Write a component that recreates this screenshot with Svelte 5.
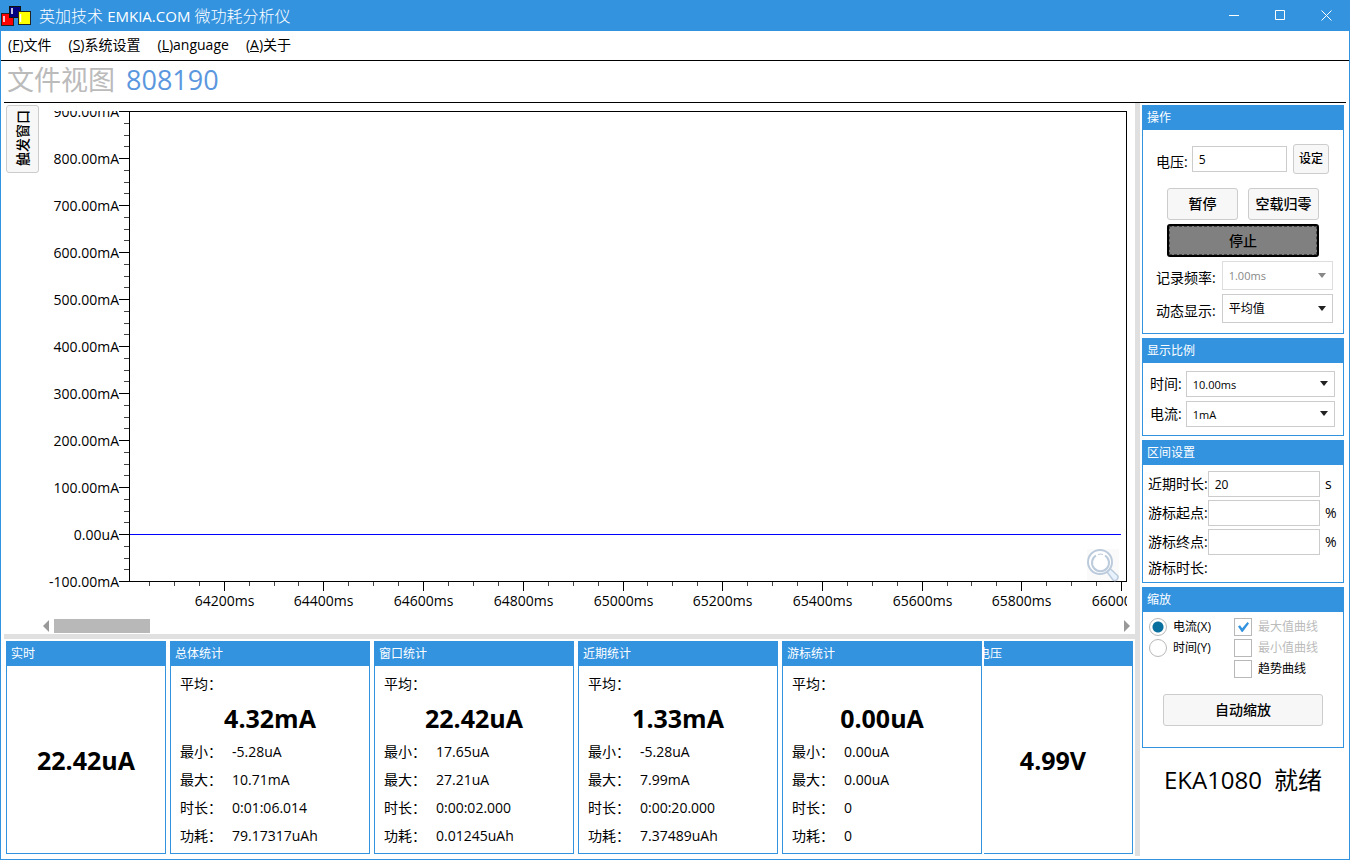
<script lang="ts">
    const menus = [
        { key: 'F', text: '文件' },
        { key: 'S', text: '系统设置' },
        { key: 'L', text: 'anguage' },
        { key: 'A', text: '关于' }
    ];

    const stats = [
        { title: '总体统计', avg: '4.32mA', min: '-5.28uA', max: '10.71mA', time: '0:01:06.014', power: '79.17317uAh' },
        { title: '窗口统计', avg: '22.42uA', min: '17.65uA', max: '27.21uA', time: '0:00:02.000', power: '0.01245uAh' },
        { title: '近期统计', avg: '1.33mA', min: '-5.28uA', max: '7.99mA', time: '0:00:20.000', power: '7.37489uAh' },
        { title: '游标统计', avg: '0.00uA', min: '0.00uA', max: '0.00uA', time: '0', power: '0' }
    ];

    // visible window of the chart
    const tStart = 64010, tSpan = 2000;
    const iMax = 900, iSpan = 1000;
    const axisLeft = 88, axisBottom = 38;

    let chartW = $state(1086);
    let chartH = $state(508);

    let voltage = $state('5');
    let recent = $state('20');
    let cursorFrom = $state('');
    let cursorTo = $state('');
    let axis = $state('X');

    let plotRight = $derived(chartW - 1);
    let plotBottom = $derived(chartH - axisBottom);

    let yTicks = $derived(Array.from({ length: 41 }, (_, i) => {
        const value = iMax - i * 25;
        return {
            y: Math.round((i * 25 / iSpan) * plotBottom) + 0.5,
            major: i % 4 === 0,
            label: value === 0 ? '0.00uA' : value.toFixed(2) + 'mA'
        };
    }));

    let xTicks = $derived(Array.from({ length: 40 }, (_, i) => {
        const t = 64050 + i * 50;
        return {
            x: Math.round(axisLeft + ((t - tStart) / tSpan) * (plotRight - axisLeft)) + 0.5,
            major: t % 200 === 0,
            label: t + 'ms'
        };
    }));
</script>

<div class="window">
    <header class="titlebar">
        <svg class="logo" width="32" height="31" viewBox="0 0 32 31" aria-hidden="true">
            <rect x="0.5" y="13.5" width="12" height="12" fill="#f00" stroke="#222" />
            <path d="M3 16v6" stroke="#fff" stroke-width="1.500" />
            <rect x="8.500" y="6.500" width="11" height="11" fill="#000080" stroke="#111" />
            <path d="M11 8v6" stroke="#fff" stroke-width="1.500" />
            <rect x="17.500" y="11.500" width="12" height="13" fill="#ff0" stroke="#222" />
            <path d="M19.500 14v8" stroke="#fff" stroke-width="1.500" />
        </svg>
        <h1>英加技术 <span>EMKIA.COM</span> 微功耗分析仪</h1>
        <div class="controls">
            <button aria-label="最小化"><svg width="11" height="11"><path d="M0 5.5h10" /></svg></button>
            <button aria-label="最大化"><svg width="11" height="11"><path d="M.5 .5h9v9h-9z" /></svg></button>
            <button aria-label="关闭"><svg width="11" height="11"><path d="M.5 .5l10 10M10.500 .5l-10 10" /></svg></button>
        </div>
    </header>

    <nav class="menu">
        {#each menus as m}
            <button>(<u>{m.key}</u>){m.text}</button>
        {/each}
    </nav>

    <div class="heading">
        <span class="view">文件视图</span>
        <span class="number">808190</span>
    </div>

    <main>
        <section class="left">
            <div class="chart-row">
                <button class="btn trigger"><span>触发窗口</span></button>
                <div class="chart-col">
                    <div class="chart" bind:clientWidth={chartW} bind:clientHeight={chartH}>
                        <svg width={chartW} height={chartH}>
                            <rect x={axisLeft + 0.5} y="0.5" width={plotRight - axisLeft} height={plotBottom} fill="#fff" stroke="#000" />
                            {#each yTicks as t}
                                <line x1={axisLeft - (t.major ? 10 : 5)} x2={axisLeft} y1={t.y} y2={t.y} class:minor={!t.major} />
                                {#if t.major}
                                    <text x={axisLeft - 10} y={t.y + 5} text-anchor="end">{t.label}</text>
                                {/if}
                            {/each}
                            {#each xTicks as t}
                                <line x1={t.x} x2={t.x} y1={plotBottom + 1} y2={plotBottom + (t.major ? 10 : 5)} class:minor={!t.major} />
                                {#if t.major}
                                    <text x={t.x} y={plotBottom + 25} text-anchor="middle">{t.label}</text>
                                {/if}
                            {/each}
                            <path d="M{axisLeft + 1} {yTicks[36].y}H{plotRight - 5}" fill="none" stroke="#0000ff" />
                            <g transform="translate({plotRight - 39} {plotBottom - 32})" fill="none" stroke="#bccbdc" stroke-width="2">
                                <rect width="32" height="32" fill="#fafafb" stroke="none" />
                                <path d="M19 21.500l3-3 8.500 8q1.500 2-.5 4t-4 .5z" fill="#e8f2fd" stroke-width="1.500" />
                                <circle cx="13" cy="13" r="12" fill="#fff" />
                                <path d="M9 6.500a8.500 8.500 0 1 0 9 0" />
                                <path d="M11 5.500a8 8 0 0 1 5 0" stroke-width="1" />
                            </g>
                        </svg>
                    </div>
                    <div class="scroll">
                        <button class="arrow prev" aria-label="向左"></button>
                        <div class="track"><div class="thumb"></div></div>
                        <button class="arrow next" aria-label="向右"></button>
                    </div>
                </div>
            </div>

            <div class="split-h"></div>

            <div class="stats">
                <section class="panel single">
                    <h2>实时</h2>
                    <div class="big">22.42uA</div>
                </section>
                {#each stats as s}
                    <section class="panel stat">
                        <h2>{s.title}</h2>
                        <dl>
                            <dt>平均：</dt>
                            <dd class="avg">{s.avg}</dd>
                            <dt>最小：</dt><dd>{s.min}</dd>
                            <dt>最大：</dt><dd>{s.max}</dd>
                            <dt>时长：</dt><dd>{s.time}</dd>
                            <dt>功耗：</dt><dd>{s.power}</dd>
                        </dl>
                    </section>
                {/each}
                <div class="clipped">
                    <section class="panel single">
                        <h2>电压</h2>
                        <div class="big">4.99V</div>
                    </section>
                </div>
            </div>
        </section>

        <div class="split-v"></div>

        <aside>
            <section class="panel">
                <h2>操作</h2>
                <div class="operate">
                    <div class="field volt">
                        <label for="voltage">电压:</label>
                        <input id="voltage" type="text" bind:value={voltage} />
                        <button class="btn set">设定</button>
                    </div>
                    <div class="actions">
                        <button class="btn">暂停</button>
                        <button class="btn">空载归零</button>
                        <button class="stop">停止</button>
                    </div>
                    <div class="field tall">
                        <label for="rate">记录频率:</label>
                        <div class="select off"><select id="rate" disabled><option>1.00ms</option></select></div>
                    </div>
                    <div class="field tall">
                        <label for="dynamic">动态显示:</label>
                        <div class="select"><select id="dynamic" class="cn"><option>平均值</option></select></div>
                    </div>
                </div>
            </section>

            <section class="panel">
                <h2>显示比例</h2>
                <div class="scale">
                    <div class="field">
                        <label for="time">时间:</label>
                        <div class="select"><select id="time"><option>10.00ms</option></select></div>
                    </div>
                    <div class="field">
                        <label for="current">电流:</label>
                        <div class="select"><select id="current"><option>1mA</option></select></div>
                    </div>
                </div>
            </section>

            <section class="panel">
                <h2>区间设置</h2>
                <div class="range">
                    <div class="field">
                        <label for="recent">近期时长:</label>
                        <input id="recent" type="text" bind:value={recent} />
                        <span class="unit">s</span>
                    </div>
                    <div class="field">
                        <label for="from">游标起点:</label>
                        <input id="from" type="text" bind:value={cursorFrom} />
                        <span class="unit">%</span>
                    </div>
                    <div class="field">
                        <label for="to">游标终点:</label>
                        <input id="to" type="text" bind:value={cursorTo} />
                        <span class="unit">%</span>
                    </div>
                    <div class="duration">游标时长:</div>
                </div>
            </section>

            <section class="panel">
                <h2>缩放</h2>
                <div class="zoom">
                    <div class="radios">
                        <label><input type="radio" name="axis" value="X" bind:group={axis} />电流(X)</label>
                        <label><input type="radio" name="axis" value="Y" bind:group={axis} />时间(Y)</label>
                    </div>
                    <div class="checks">
                        <label class="off"><input type="checkbox" checked disabled />最大值曲线</label>
                        <label class="off"><input type="checkbox" disabled />最小值曲线</label>
                        <label><input type="checkbox" />趋势曲线</label>
                    </div>
                    <button class="btn auto">自动缩放</button>
                </div>
            </section>

            <div class="status"><span>EKA1080</span><span>就绪</span></div>
        </aside>
    </main>
</div>

<style>
    :global(body) { margin: 0; background: #fff; }
    .window {
        box-sizing: border-box; min-height: 100vh; display: flex; flex-direction: column;
        border: 1px solid #3393df; border-top: 0; background: #fff; color: #000;
        font-family: "Open Sans", "Noto Sans CJK SC", sans-serif; font-size: 14px; line-height: 20px;
    }
    .window * { box-sizing: border-box; }
    button, input, select { font-family: inherit; color: inherit; margin: 0; }
    button { padding: 0; }

    .titlebar { height: 31px; display: flex; align-items: center; background: #3393df; color: #fff; }
    .logo { flex: none; margin-right: 6px; }
    h1 { margin: 0; font-size: 16px; font-weight: 300; line-height: 24px; flex: 1; white-space: nowrap; }
    h1 span { font-size: 15px; font-weight: 400; }
    .controls { display: flex; align-self: stretch; }
    .controls button { width: 46px; border: 0; background: none; }
    .controls svg { display: block; margin: 0 auto; fill: none; stroke: #fff; }

    .menu { height: 30px; padding: 0 7px 2px; display: flex; gap: 17px; border-bottom: 1px solid #000; }
    .menu button { border: 0; background: none; font-size: 14px; line-height: 20px; }

    .heading {
        height: 42px; margin: 0 3px; padding: 0 3px 3px; display: flex; align-items: center; gap: 11px;
        border-bottom: 1px solid #000; font-size: 27px; line-height: 36px;
    }
    .view { color: #bbb; }
    .number { color: #5b97de; }

    main { flex: 1; display: flex; padding: 0 0 3px 3px; }
    .left { flex: 1; min-width: 0; display: flex; flex-direction: column; }
    .split-h { height: 5px; background: #e0e0e0; }
    .split-v { width: 5px; background: #e0e0e0; }

    .chart-row { flex: 1; display: flex; gap: 2px; padding: 2px 2px 1px; }
    .chart-col { flex: 1; min-width: 0; display: flex; flex-direction: column; padding-top: 6px; }
    .chart { flex: 1 1 0; min-height: 300px; margin-right: 6px; overflow: hidden; }
    .chart svg { display: block; }
    .chart text { font-size: 14px; }
    .chart line { stroke: #000; }
    .chart line.minor { stroke: #444; }

    .scroll { height: 14px; display: flex; align-items: center; gap: 5px; padding: 0 3px 0 2px; }
    .track { flex: 1; }
    .thumb { width: 9%; height: 14px; background: #b8b8b8; }
    .arrow { width: 6px; height: 12px; border: 0; background: #999; }
    .prev { clip-path: polygon(100% 0, 100% 100%, 0 50%); }
    .next { clip-path: polygon(0 0, 100% 50%, 0 100%); }

    .btn {
        border: 1px solid #ccc; border-radius: 3px; background: #f7f7f7;
        font-size: 14px; font-weight: 500; line-height: 20px; white-space: nowrap;
    }
    .trigger { width: 33px; height: 68px; padding-top: 3px; }
    .trigger span { display: inline-block; writing-mode: vertical-rl; text-orientation: sideways; transform: rotate(180deg); }

    .panel { border: 1px solid #3393df; background: #fff; }
    h2 {
        margin: 0; height: 24px; padding: 0 4px; background: #3393df; color: #fff;
        font-size: 12px; font-weight: 400; line-height: 24px; white-space: nowrap;
    }

    .stats { display: flex; gap: 4px; padding: 2px; }
    .stat { flex: 1 1 200px; }
    .single { flex: 1 1 160px; display: flex; flex-direction: column; }
    .clipped { flex: 1 1 149px; min-width: 0; margin-left: -2px; display: flex; justify-content: flex-end; overflow: hidden; }
    .clipped .single { flex: 1 0 160px; }
    .big, .avg { font-size: 25px; font-weight: 700; text-align: center; line-height: 40px; }
    .big { flex: 1; display: flex; align-items: center; justify-content: center; }
    dl { margin: 0; padding: 4px 9px 3px; display: grid; grid-template-columns: 52px 1fr; line-height: 28px; }
    dt, dd { margin: 0; white-space: nowrap; }
    dt:first-child { grid-column: 1 / -1; }
    .avg { grid-column: 1 / -1; }

    aside { width: 209px; padding: 2px 5px 0 2px; display: flex; flex-direction: column; gap: 4px; }
    .field { display: flex; align-items: center; }
    .field label { flex: none; white-space: nowrap; }
    .field input {
        flex: 1; min-width: 0; height: 26px; padding: 0 6px; border: 1px solid #ccc; background: #fff; font-size: 12px;
    }
    .select { position: relative; flex: 1; min-width: 0; height: 26px; }
    .select::after {
        content: ''; position: absolute; right: 7px; top: 50%; margin-top: -3px;
        border: 4px solid transparent; border-top: 5px solid #222; border-bottom: 0; pointer-events: none;
    }
    .select.off::after { border-top-color: #888; }
    select {
        appearance: none; display: block; width: 100%; height: 100%; padding: 0 6px;
        border: 1px solid #ccc; border-radius: 0; background: #fff; font-size: 11px;
    }
    select.cn { font-size: 12px; }
    select:disabled { color: #888; border-color: #ddd; opacity: 1; }

    .operate { padding: 14px 10px 10px 13px; display: flex; flex-direction: column; gap: 4px; }
    .operate .field label { padding-top: 5px; }
    .operate .volt { gap: 4px; margin: 0 4px 10px 0; }
    .set { width: 36px; height: 30px; margin-left: 2px; font-size: 12px; }
    .actions { display: grid; grid-template-columns: 1fr 1fr; gap: 4px 10px; margin: 0 14px 0 11px; }
    .actions .btn { height: 32px; }
    .stop {
        grid-column: 1 / -1; height: 33px; border: 2px solid #000; border-radius: 3px; background: #808080;
        outline: 1px dashed #444; outline-offset: -3px; font-size: 14px; font-weight: 500; line-height: 20px;
    }
    .tall { gap: 6px; }
    .tall .select { height: 29px; }

    .scale { padding: 8px 8px 8px 7px; display: flex; flex-direction: column; gap: 4px; }
    .scale .field { gap: 4px; }

    .range { padding: 6px 0 5px 5px; display: flex; flex-direction: column; gap: 3px; }
    .unit { width: 23px; padding-left: 5px; }
    .duration { line-height: 19px; }

    .zoom { padding: 6px 6px 21px; display: grid; grid-template-columns: 85px 1fr; row-gap: 16px; font-size: 12px; }
    .radios, .checks { display: flex; flex-direction: column; gap: 3px; }
    .zoom label { display: flex; align-items: center; gap: 6px; height: 18px; white-space: nowrap; }
    .zoom label.off { color: #bbb; }
    .zoom input { appearance: none; position: relative; width: 18px; height: 18px; border: 1px solid #b8b8b8; background: #fff; }
    .zoom input[type="radio"] { border-radius: 50%; }
    .zoom input[type="radio"]:checked { background: radial-gradient(circle, #086f9f 5px, #fff 6px); }
    .zoom input[type="checkbox"]:checked::after {
        content: ''; position: absolute; left: 3px; top: 3px; width: 11px; height: 10px; background: #3393df;
        clip-path: polygon(0 45%, 18% 32%, 38% 62%, 86% 0, 100% 15%, 42% 100%, 34% 100%);
    }
    .auto { grid-column: 1 / -1; height: 32px; margin: 0 14px; }

    .status { display: flex; justify-content: center; gap: 12px; padding-top: 12px; font-size: 24px; line-height: 32px; white-space: nowrap; }
</style>
